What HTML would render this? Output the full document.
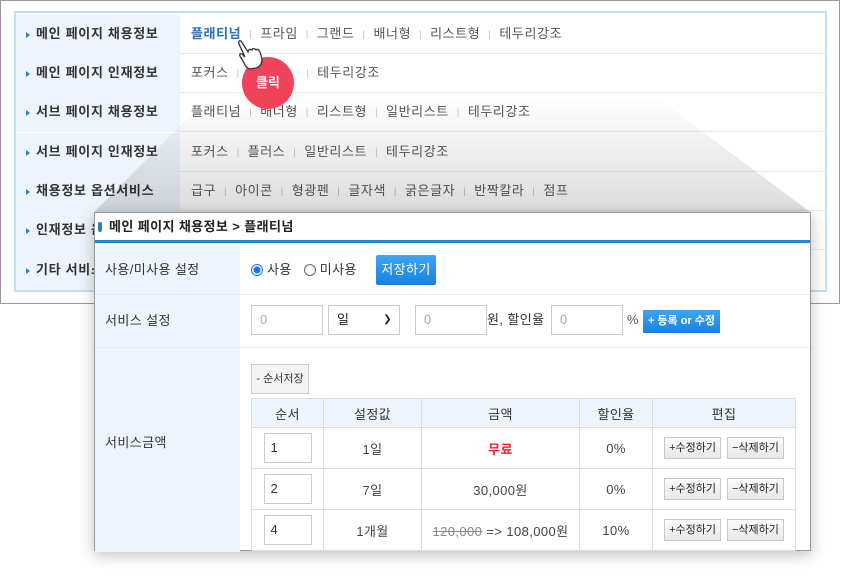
<!DOCTYPE html>
<html><head><meta charset="utf-8"><style>
*{margin:0;padding:0;box-sizing:border-box}
body{width:841px;height:575px;background:#fff;position:relative;overflow:hidden;font-family:"Liberation Sans","Noto Sans CJK KR",sans-serif;font-size:13px;color:#333}
.a{position:absolute}
.outer{left:0;top:0;width:840px;height:304px;border:1px solid #999;background:#fff}
.inner{left:14px;top:11px;width:813px;height:281px;border:2px solid #bfe0f5;background:#fff}
.row{position:absolute;left:0;width:809px;height:39px;border-bottom:1px solid #e6e9ee}
.row .l{position:absolute;left:0;top:0;width:164px;height:39px;background:#eef4fb;font-weight:bold;color:#333;line-height:38px;padding-left:10px;font-size:13px;letter-spacing:.7px}
.row .l:before{content:"";display:inline-block;border-left:4px solid #2a7fc9;border-top:3.5px solid transparent;border-bottom:3.5px solid transparent;margin-right:6px;vertical-align:middle}
.row .r{position:absolute;left:175px;top:0;line-height:38px;color:#555;font-size:13px;letter-spacing:.6px}
.sep{color:#bbb;font-size:9px;margin:0 8px;vertical-align:1px}
.pop{left:94px;top:212px;width:717px;height:339px;border:1px solid #999;background:#fff;box-shadow:0 4px 14px rgba(0,0,0,.25);letter-spacing:.4px}
.lab{position:absolute;left:0;width:145px;background:#eef4fb;padding-left:10px;font-size:13px;color:#333}
.hline{position:absolute;left:0;width:715px;height:1px;background:#e8ecf0}
.inp{position:absolute;height:30px;border:1px solid #ccc;background:#fff;color:#aaa;padding-left:8px;line-height:28px;font-size:13px}
table{position:absolute;left:156px;top:185px;border-collapse:collapse;width:545px;font-size:13px}
td,th{border:1px solid #ddd;text-align:center;height:41px;color:#444}
th{height:29px;background:#eef4fb;font-weight:normal;color:#333}
.sb{display:inline-block;width:48px;height:30px;border:1px solid #ccc;text-align:left;padding-left:6px;line-height:28px;color:#333;vertical-align:middle}
.tb{display:inline-block;border:1px solid #c8c8c8;background:linear-gradient(#fbfbfb,#e8e8e8);font-size:11px;height:22px;line-height:20px;padding:0 4px;color:#222;margin:0 1px;letter-spacing:0}
</style></head><body>
<div class="a outer"></div>
<div class="a inner">
 <div class="row" style="top:2px"><div class="l">메인 페이지 채용정보</div><div class="r"><span style="color:#2a6ebd;font-weight:bold">플래티넘</span><span class="sep">|</span>프라임<span class="sep">|</span>그랜드<span class="sep">|</span>배너형<span class="sep">|</span>리스트형<span class="sep">|</span>테두리강조</div></div>
 <div class="row" style="top:41px"><div class="l">메인 페이지 인재정보</div><div class="r">포커스<span class="sep">|</span>&nbsp;&nbsp;&nbsp;&nbsp;&nbsp;&nbsp;&nbsp;&nbsp;&nbsp;&nbsp;&nbsp;&nbsp;<span class="sep">|</span>테두리강조</div></div>
 <div class="row" style="top:80px"><div class="l">서브 페이지 채용정보</div><div class="r">플래티넘<span class="sep">|</span>배너형<span class="sep">|</span>리스트형<span class="sep">|</span>일반리스트<span class="sep">|</span>테두리강조</div></div>
 <div class="row" style="top:120px"><div class="l">서브 페이지 인재정보</div><div class="r">포커스<span class="sep">|</span>플러스<span class="sep">|</span>일반리스트<span class="sep">|</span>테두리강조</div></div>
 <div class="row" style="top:159px"><div class="l">채용정보 옵션서비스</div><div class="r">급구<span class="sep">|</span>아이콘<span class="sep">|</span>형광펜<span class="sep">|</span>글자색<span class="sep">|</span>굵은글자<span class="sep">|</span>반짝칼라<span class="sep">|</span>점프</div></div>
 <div class="row" style="top:198px"><div class="l">인재정보 옵션</div></div>
 <div class="row" style="top:237px;border:0;height:40px"><div class="l" style="height:40px;line-height:40px">기타 서비스</div></div>
</div>
<svg class="a" style="left:0;top:0" width="841" height="575"><defs><linearGradient id="g" x1="0" y1="0" x2="0" y2="1"><stop offset="0" stop-color="#000" stop-opacity="0"/><stop offset="1" stop-color="#000" stop-opacity=".14"/></linearGradient></defs><polygon points="94,212 210,96 655,96 810,212" fill="url(#g)"/></svg>
<div class="a" style="left:242px;top:57px;width:52px;height:52px;border-radius:50%;background:#f0435a;color:#fff;font-weight:bold;font-size:13px;text-align:center;line-height:52px">클릭</div>
<svg class="a" style="left:235px;top:38px" width="30" height="34" viewBox="0 0 30 34"><path d="M4 6 Q3 2 6 3 L13 14 Q14 10 17 12 Q18 9 21 12 Q23 10 25 14 L27 21 Q27 28 21 30 L15 31 Q11 30 9 25 L5 18 Q4 15 7 16 L10 19 Z" fill="#fff" stroke="#333" stroke-width="1.3"/></svg>
<div class="a pop">
 <div class="a" style="left:0;top:0;width:715px;height:30px;border-bottom:3px solid #1e88d8;font-weight:bold;font-size:13px;color:#222;line-height:28px;padding-left:14px">메인 페이지 채용정보 &gt; 플래티넘<span class="a" style="left:3px;top:9px;width:4px;height:10px;border-radius:2px;background:#2a7fc9"></span></div>
 <div class="lab" style="top:33px;height:48px;line-height:48px">사용/미사용 설정</div>
 <div class="a" style="left:156px;top:33px;line-height:48px;font-size:13px"><span style="display:inline-block;width:12px;height:12px;border-radius:50%;border:1px solid #1a73e8;background:radial-gradient(#1a73e8 3px,#fff 4px);vertical-align:-2px"></span> 사용 &nbsp;&nbsp;<span style="display:inline-block;width:12px;height:12px;border-radius:50%;border:1px solid #666;vertical-align:-2px"></span> 미사용</div>
 <div class="a" style="left:281px;top:42px;width:60px;height:30px;border-radius:2px;background:linear-gradient(#3ea5f4,#1782dc);color:#fff;text-align:center;line-height:30px;font-size:13px">저장하기</div>
 <div class="hline" style="top:81px"></div>
 <div class="lab" style="top:82px;height:52px;line-height:52px">서비스 설정</div>
 <div class="inp" style="left:156px;top:92px;width:72px">0</div>
 <div class="inp" style="left:233px;top:92px;width:72px;color:#222">일<span style="position:absolute;right:7px;top:0;font-size:10px">&#10095;</span></div>
 <div class="inp" style="left:320px;top:92px;width:72px">0</div>
 <div class="a" style="left:392px;top:92px;line-height:30px">원, 할인율</div>
 <div class="inp" style="left:456px;top:92px;width:72px">0</div>
 <div class="a" style="left:532px;top:92px;line-height:30px;color:#555">%</div>
 <div class="a" style="left:548px;top:97px;width:77px;height:23px;background:linear-gradient(#3ea5f4,#1782dc);color:#fff;font-weight:bold;font-size:11px;text-align:center;line-height:23px;letter-spacing:0">+ 등록 or 수정</div>
 <div class="hline" style="top:134px"></div>
 <div class="lab" style="top:135px;height:204px;line-height:190px">서비스금액</div>
 <div class="a" style="left:156px;top:151px;width:58px;height:30px;border:1px solid #ccc;background:#f4f4f4;font-size:11px;text-align:center;line-height:28px;letter-spacing:0">- 순서저장</div>
 <table>
  <tr><th style="width:72px">순서</th><th style="width:98px">설정값</th><th style="width:158px">금액</th><th style="width:73px">할인율</th><th>편집</th></tr>
  <tr><td><span class="sb">1</span></td><td>1일</td><td style="color:#e23;font-weight:bold">무료</td><td>0%</td><td><span class="tb">+수정하기</span> <span class="tb">−삭제하기</span></td></tr>
  <tr><td><span class="sb">2</span></td><td>7일</td><td>30,000원</td><td>0%</td><td><span class="tb">+수정하기</span> <span class="tb">−삭제하기</span></td></tr>
  <tr><td><span class="sb">4</span></td><td>1개월</td><td><s style="color:#888">120,000</s> =&gt; 108,000원</td><td>10%</td><td><span class="tb">+수정하기</span> <span class="tb">−삭제하기</span></td></tr>
 </table>
</div>
</body></html>
